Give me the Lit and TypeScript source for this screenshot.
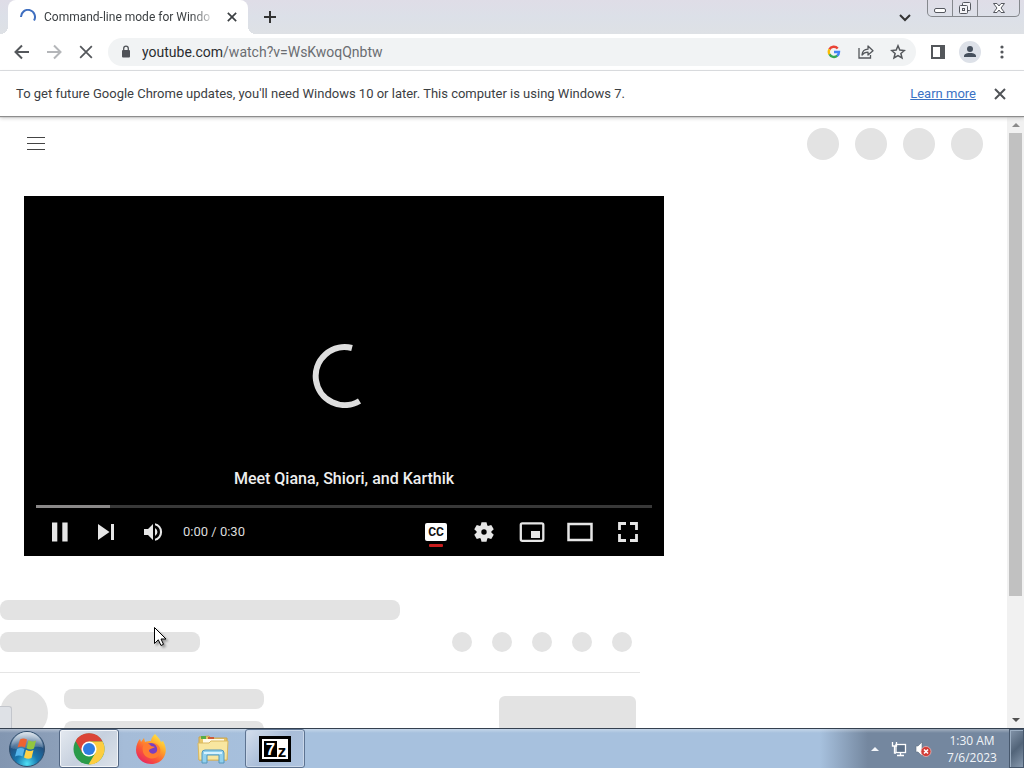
import { LitElement, html, css, svg } from 'lit';
import { customElement, property } from 'lit/decorators.js';

const baseStyles = css`
  :host, * { box-sizing: border-box; }
  button {
    display: flex;
    align-items: center;
    justify-content: center;
    flex: none;
    background: none;
    border: none;
    padding: 0;
    color: inherit;
    font: inherit;
    cursor: default;
  }
  svg { display: block; flex: none; }
`;

const closeIcon = (size: number, width: number) => html`
  <svg width=${size} height=${size} viewBox="0 0 12 12" fill="none" stroke="currentColor" stroke-width=${width}>
    <path d="M1 1 11 11M11 1 1 11" />
  </svg>
`;

@customElement('browser-tabs')
export class BrowserTabs extends LitElement {
  @property({ type: String }) label = '';

  static styles = [baseStyles, css`
    :host {
      display: flex;
      height: 34px;
      padding-left: 8px;
      background: linear-gradient(#dfdde7, #dce0e8 50%, #dee1e5);
      color: #3c4043;
    }
    .tab {
      position: relative;
      display: flex;
      align-items: center;
      width: 240px;
      padding: 0 8px 0 12px;
      gap: 8px;
      background: #fff;
      border-radius: 8px 8px 0 0;
    }
    .tab::before, .tab::after {
      content: '';
      position: absolute;
      bottom: 0;
      width: 8px;
      height: 8px;
    }
    .tab::before { left: -8px; background: radial-gradient(circle at 0 0, transparent 8px, #fff 8px); }
    .tab::after { right: -8px; background: radial-gradient(circle at 100% 0, transparent 8px, #fff 8px); }
    .label {
      flex: 1;
      overflow: hidden;
      white-space: nowrap;
      font-size: 12px;
      line-height: 16px;
      -webkit-mask-image: linear-gradient(90deg, #000 86%, transparent);
      mask-image: linear-gradient(90deg, #000 86%, transparent);
    }
    .close { width: 16px; height: 16px; }
    .new { width: 28px; margin-left: 8px; }
    .search { width: 28px; margin: 0 8px 0 auto; }
    .window {
      display: flex;
      height: 17px;
      margin-right: 4px;
      border: 1px solid #85888d;
      border-top: none;
      border-radius: 0 0 5px 5px;
      overflow: hidden;
    }
    .window button { width: 25px; border-right: 1px solid #85888d; }
    .window button:last-child { width: 41px; border: none; }
  `];

  render() {
    return html`
      <div class="tab">
        <svg width="16" height="16" viewBox="0 0 16 16" fill="none" stroke="#3f6fc0" stroke-width="2">
          <path d="M1 8A7 7 0 1 1 14 11.5" />
        </svg>
        <span class="label">${this.label}</span>
        <button class="close" aria-label="Close tab">${closeIcon(10, 2)}</button>
      </div>
      <button class="new" aria-label="New tab">
        <svg width="14" height="14" viewBox="0 0 14 14" stroke="#333" stroke-width="2"><path d="M7 1V13M1 7H13" /></svg>
      </button>
      <button class="search" aria-label="Search tabs">
        <svg width="12" height="12" viewBox="0 0 12 12" fill="none" stroke="#333" stroke-width="2"><path d="M1 4 6 9 11 4" /></svg>
      </button>
      <div class="window">
        <button aria-label="Minimize">
          <svg width="14" height="16" viewBox="0 0 14 16" fill="#fff" stroke="#55585f"><rect x="1.5" y="8.5" width="11" height="4" rx="1.5" /></svg>
        </button>
        <button aria-label="Restore">
          <svg width="14" height="16" viewBox="0 0 14 16" fill="#f4f4f7" stroke="#55585f">
            <rect x="4.5" y="2.5" width="8" height="8" rx="1" />
            <rect x="1.5" y="5.5" width="8" height="8" rx="1" />
            <rect x="4.5" y="8.5" width="2" height="2" />
          </svg>
        </button>
        <button aria-label="Close">
          <svg width="14" height="16" viewBox="0 0 14 16" fill="#fff" stroke="#55585f">
            <path d="M1.5 3.5H5L7 6 9 3.5H12.5L9 8 12.5 12.5H9L7 10 5 12.5H1.5L5 8Z" />
          </svg>
        </button>
      </div>
    `;
  }
}

@customElement('browser-toolbar')
export class BrowserToolbar extends LitElement {
  @property({ type: String }) host = '';
  @property({ type: String }) path = '';

  static styles = [baseStyles, css`
    :host {
      display: flex;
      align-items: center;
      height: 37px;
      padding: 0 8px;
      gap: 4px;
      background: #fff;
      border-bottom: 1px solid #dadce0;
      color: #54575b;
    }
    button { width: 28px; height: 28px; border-radius: 50%; }
    .off { color: #b4b6b9; }
    .address {
      flex: 1;
      display: flex;
      align-items: center;
      height: 28px;
      margin: 0 4px;
      padding: 0 4px;
      gap: 4px;
      background: #f1f3f4;
      border-radius: 14px;
    }
    .url {
      flex: 1;
      overflow: hidden;
      white-space: nowrap;
      margin-left: -2px;
      font-size: 14px;
      line-height: 20px;
      color: #6a6d71;
    }
    .url b { font-weight: 400; color: #2b2d30; }
    .avatar { width: 22px; height: 22px; border-radius: 50%; background: #dde1e8; }
  `];

  render() {
    return html`
      <button aria-label="Back">
        <svg width="16" height="16" viewBox="0 0 16 16" fill="none" stroke="currentColor" stroke-width="2"><path d="M15 8H2M8 1.5 1.5 8 8 14.5" /></svg>
      </button>
      <button class="off" aria-label="Forward" disabled>
        <svg width="16" height="16" viewBox="0 0 16 16" fill="none" stroke="currentColor" stroke-width="2"><path d="M1 8H14M8 1.5 14.5 8 8 14.5" /></svg>
      </button>
      <button aria-label="Stop">${closeIcon(14, 1.5)}</button>
      <div class="address">
        <button aria-label="Site information">
          <svg width="12" height="14" viewBox="0 0 12 14" fill="#505358">
            <rect x="2" y="5" width="8" height="7.5" rx="1" />
            <path d="M3.7 6V3.5a2.3 2.3 0 0 1 4.6 0V6" fill="none" stroke="#505358" stroke-width="1.3" />
          </svg>
        </button>
        <span class="url"><b>${this.host}</b>${this.path}</span>
        <button aria-label="Search with Google">
          <svg width="14" height="14" viewBox="0 0 14 14" fill="none" stroke-width="2.4">
            <path d="M2.4 4.4A5 5 0 0 1 10.7 3.5" stroke="#ea4335" />
            <path d="M2.5 9.3A5 5 0 0 1 2.5 4.3" stroke="#fbbc05" />
            <path d="M10.3 10.7A5 5 0 0 1 2.5 9.2" stroke="#34a853" />
            <path d="M7 7H12A5 5 0 0 1 10.2 10.8" stroke="#4285f4" />
          </svg>
        </button>
        <button aria-label="Share">
          <svg width="16" height="16" viewBox="0 0 16 16" fill="none" stroke="currentColor" stroke-width="1.3">
            <path d="M1 4V14H12.5V11" />
            <path d="M4 11C4.3 7 6.5 5.3 10 5.2V2L15 6.7 10 11V8.2C7.2 8.2 5.5 9 4 11Z" stroke-linejoin="round" />
          </svg>
        </button>
        <button aria-label="Bookmark this tab">
          <svg width="16" height="16" viewBox="0 0 16 16" fill="none" stroke="currentColor" stroke-width="1.5">
            <path d="M8 1.8 9.8 6.1 14.4 6.5 10.9 9.5 12 14 8 11.6 4 14 5.1 9.5 1.6 6.5 6.2 6.1Z" />
          </svg>
        </button>
      </div>
      <button aria-label="Side panel">
        <svg width="14" height="14" viewBox="0 0 14 14" fill="currentColor"><path d="M0 0H14V14H0ZM2 2V12H9V2Z" fill-rule="evenodd" /></svg>
      </button>
      <button aria-label="Profile">
        <svg class="avatar" viewBox="0 0 22 22" fill="#46505d"><circle cx="11" cy="8" r="3" /><path d="M5 16V15C5 12.5 9 12 11 12S17 12.5 17 15V16Z" /></svg>
      </button>
      <button aria-label="Menu">
        <svg width="4" height="14" viewBox="0 0 4 14" fill="currentColor"><circle cx="2" cy="2" r="1.6" /><circle cx="2" cy="7" r="1.6" /><circle cx="2" cy="12" r="1.6" /></svg>
      </button>
    `;
  }
}

@customElement('info-bar')
export class InfoBar extends LitElement {
  static styles = [baseStyles, css`
    :host {
      position: relative;
      z-index: 1;
      display: flex;
      align-items: center;
      height: 45px;
      padding: 0 10px 0 16px;
      background: #fff;
      box-shadow: 0 1px 1px #8d8d8d, 0 2px 4px #c8c8c8;
      color: #3c4043;
      font-size: 13px;
      line-height: 20px;
    }
    a { margin: 0 10px 0 auto; color: #3b72c4; }
    button { width: 28px; height: 28px; color: #505357; }
  `];

  render() {
    return html`
      <span>To get future Google Chrome updates, you'll need Windows 10 or later. This computer is using Windows 7.</span>
      <a href="#">Learn more</a>
      <button aria-label="Dismiss">${closeIcon(12, 2)}</button>
    `;
  }
}

@customElement('video-player')
export class VideoPlayer extends LitElement {
  @property({ type: String }) heading = '';
  @property({ type: String }) time = '';
  @property({ type: Number }) loaded = 0;

  static styles = [baseStyles, css`
    :host {
      display: flex;
      flex-direction: column;
      aspect-ratio: 16 / 9;
      padding: 0 12px;
      background: #000;
      color: #e6e6e6;
    }
    .stage {
      flex: 1;
      display: flex;
      flex-direction: column;
      align-items: center;
      justify-content: flex-end;
      gap: 59px;
      padding-bottom: 14px;
    }
    .heading { font-size: 16px; font-weight: 500; line-height: 24px; color: #eee; }
    .track { height: 3px; background: #383838; }
    .loaded { height: 3px; background: #8a8888; }
    .controls { display: flex; align-items: center; height: 48px; }
    button { width: 48px; height: 48px; }
    .narrow { width: 46px; }
    .time { margin: 0 auto 0 7px; font-size: 13px; line-height: 16px; color: #ddd; }
    .cc { font-size: 12px; font-weight: 700; }
  `];

  private _button(label: string, shape: unknown, cls = '') {
    return html`
      <button class=${cls} aria-label=${label}>
        <svg width="48" height="48" viewBox="0 0 48 48" fill="currentColor">${shape}</svg>
      </button>
    `;
  }

  render() {
    return html`
      <div class="stage">
        <svg width="64" height="64" viewBox="0 0 64 64" fill="none" stroke="#dedede" stroke-width="6">
          <path d="M40 4A29 29 0 1 0 47.5 57" />
        </svg>
        <div class="heading">${this.heading}</div>
      </div>
      <div class="track"><div class="loaded" style="width: ${this.loaded}%"></div></div>
      <div class="controls">
        ${this._button('Pause', svg`<path d="M16 14.5H21.3V33.5H16ZM26.3 14.5H31.6V33.5H26.3Z" />`)}
        ${this._button('Next', svg`<path d="M15 16 26.5 24 15 32ZM28 16H31V32H28Z" />`, 'narrow')}
        ${this._button('Mute', svg`
          <path transform="translate(6 6)" d="M9 21h4l5 5V10l-5 5H9Z" />
          <path transform="translate(7 6)" d="M19 14v8a4.5 4.5 0 0 0 0-8ZM19 11.3a7 7 0 0 1 0 13.4v2.1a9 9 0 0 0 0-17.6Z" />
        `, 'narrow')}
        <span class="time">${this.time}</span>
        ${this._button('Subtitles', svg`
          <rect x="13" y="15" width="22" height="18" rx="2" fill="#fff" />
          <text class="cc" x="24" y="28" text-anchor="middle" fill="#111">CC</text>
          <rect x="17" y="36" width="14" height="3" rx="1" fill="#c81d1d" />
        `)}
        ${this._button('Settings', svg`
          <circle cx="24" cy="24" r="5" fill="none" stroke="currentColor" stroke-width="4.6" />
          ${[0, 60, 120, 180, 240, 300].map((a) => svg`<path transform="rotate(${a} 24 24)" d="M21.5 14.2H26.5L27.6 18.5H20.4Z" />`)}
        `)}
        ${this._button('Miniplayer', svg`
          <rect x="12.8" y="15.3" width="22.5" height="17.5" rx="1.5" fill="none" stroke="currentColor" stroke-width="2.3" />
          <rect x="23" y="23" width="9" height="7" />
        `)}
        ${this._button('Theater mode', svg`<rect x="12.5" y="16" width="23" height="16" fill="none" stroke="currentColor" stroke-width="2.5" />`)}
        ${this._button('Full screen', svg`
          <path d="M15.5 22V15.5H22M26 15.5H32.5V22M32.5 26V32.5H26M22 32.5H15.5V26" fill="none" stroke="currentColor" stroke-width="2.8" />
        `)}
      </div>
    `;
  }
}

@customElement('watch-page')
export class WatchPage extends LitElement {
  static styles = [baseStyles, css`
    :host { display: flex; min-height: 0; background: #fff; }
    .content { flex: 1; overflow: hidden; }
    header {
      display: flex;
      align-items: center;
      height: 56px;
      padding: 0 24px;
      gap: 16px;
    }
    header button { width: 24px; height: 24px; margin-right: auto; }
    .dot { width: 32px; height: 32px; border-radius: 50%; background: #e3e3e3; }
    .small { width: 20px; height: 20px; }
    .large { width: 48px; height: 48px; }
    video-player { max-width: 640px; margin: 24px 24px 44px; }
    .details { max-width: 640px; }
    .bar { width: 200px; height: 20px; border-radius: 8px; background: #e3e3e3; }
    .title { width: 400px; }
    .row { display: flex; gap: 20px; padding: 12px 8px 20px 0; border-bottom: 1px solid #e5e5e5; }
    .row .bar { margin-right: auto; }
    .owner { display: flex; gap: 16px; padding: 16px 4px 0 0; }
    .lines { display: flex; flex-direction: column; gap: 12px; margin-right: auto; }
    .subscribe { width: 137px; height: 36px; margin-top: 7px; border-radius: 6px; background: #e3e3e3; }
    .scroll {
      display: flex;
      flex-direction: column;
      align-items: center;
      width: 17px;
      padding-top: 1px;
      background: #f1f1f1;
    }
    .scroll button { width: 16px; height: 16px; }
    .rail { flex: 1; width: 13px; }
    .thumb { height: 80%; background: #c1c1c1; }
  `];

  render() {
    return html`
      <div class="content">
        <header>
          <button aria-label="Guide">
            <svg width="18" height="14" viewBox="0 0 18 14" stroke="#444"><path d="M0 .5H18M0 6.5H18M0 12.5H18" /></svg>
          </button>
          ${[1, 2, 3, 4].map(() => html`<div class="dot"></div>`)}
        </header>
        <video-player heading="Meet Qiana, Shiori, and Karthik" time="0:00 / 0:30" loaded="12"></video-player>
        <div class="details">
          <div class="bar title"></div>
          <div class="row">
            <div class="bar"></div>
            ${[1, 2, 3, 4, 5].map(() => html`<div class="dot small"></div>`)}
          </div>
          <div class="owner">
            <div class="dot large"></div>
            <div class="lines"><div class="bar"></div><div class="bar"></div></div>
            <div class="subscribe"></div>
          </div>
        </div>
      </div>
      <div class="scroll">
        <button aria-label="Scroll up"><svg width="8" height="4" viewBox="0 0 8 4" fill="#8a8a8a"><path d="M0 4 4 0 8 4Z" /></svg></button>
        <div class="rail"><div class="thumb"></div></div>
        <button aria-label="Scroll down"><svg width="8" height="4" viewBox="0 0 8 4" fill="#505050"><path d="M0 0 4 4 8 0Z" /></svg></button>
      </div>
    `;
  }
}

@customElement('task-bar')
export class TaskBar extends LitElement {
  @property({ type: String }) time = '';
  @property({ type: String }) date = '';

  static styles = [baseStyles, css`
    :host {
      position: relative;
      z-index: 1;
      display: flex;
      height: 40px;
      gap: 2px;
      border-top: 1px solid #34404f;
      background:
        linear-gradient(#ffffff55, #ffffff00 4px),
        linear-gradient(90deg, #8296b1 0, #8c9fb9 56px, #a5bcd8 124px, #a7c1de 300px, #a7c1de 820px, #74879f 868px, #74879f);
    }
    .start { width: 54px; margin-right: 3px; }
    .task { width: 60px; border: 1px solid transparent; border-radius: 3px; }
    .active { border-color: #526682; background: linear-gradient(135deg, #e4e9f0, #c6d0de 50%, #dde3ea); box-shadow: inset 0 0 0 1px #f2f5f9; }
    .open { border-color: #5d7391; background: linear-gradient(135deg, #d5dfed, #a9bdd8 50%, #aec4e0); box-shadow: inset 0 0 0 1px #c9d7e9; }
    .tray { display: flex; align-items: center; gap: 4px; margin-left: auto; }
    .tray button { width: 20px; height: 24px; }
    .clock {
      width: 70px;
      color: #f0f4f8;
      font-family: "Open Sans", "Noto Sans", sans-serif;
      font-size: 12px;
      line-height: 17px;
      text-align: center;
    }
    .desktop { width: 15px; border: 1px solid #46576c; box-shadow: inset 1px 1px #9dafc3; background: linear-gradient(135deg, #8495aa, #526479 50%, #8799ae); }
    .badge { font-family: "Liberation Sans", sans-serif; font-weight: 700; }
  `];

  render() {
    return html`
      <button class="start" aria-label="Start">
        <svg width="38" height="38" viewBox="0 0 38 38">
          <defs>
            <radialGradient id="orb" cx="50%" cy="92%" r="90%">
              <stop offset="0" stop-color="#4fe0f5" /><stop offset=".35" stop-color="#1877ae" />
              <stop offset=".7" stop-color="#23507f" /><stop offset="1" stop-color="#8fa9c2" />
            </radialGradient>
            <linearGradient id="gloss" x2="0" y2="1"><stop stop-color="#fff" stop-opacity=".7" /><stop offset="1" stop-color="#fff" stop-opacity=".12" /></linearGradient>
          </defs>
          <circle cx="19" cy="19" r="17.5" fill="url(#orb)" stroke="#304d6b" />
          <path d="M3 18A16 16 0 0 1 35 18C26 14 12 22 3 18Z" fill="url(#gloss)" />
          <path d="M12 9.5C14 8 16.5 8 19 9.5L17 17.5C14.5 16 12 16 9.5 17.5Z" fill="#ee6331" />
          <path d="M20.5 10.3C23 11.8 25.5 11.8 28 10.5L26 18.5C23.5 20 21 19.5 18.5 18.2Z" fill="#92c63f" />
          <path d="M9 19C11.5 17.5 14 17.5 16.5 19L14.5 26.5C12 25 9.5 25 7 26.5Z" fill="#55b6ec" />
          <path d="M18 19.8C20.5 21.2 23 21.5 25.5 20L23.5 28C21 29.3 18.5 28.8 16 27.5Z" fill="#ffd246" />
        </svg>
      </button>
      <button class="task active" aria-label="Google Chrome">
        <svg width="32" height="32" viewBox="0 0 32 32">
          <circle cx="16" cy="16" r="15.5" fill="#2a9b4a" />
          <path d="M16 8.5H29.6A15.5 15.5 0 0 0 2.6 8L9.5 20 12 12Z" fill="#db4437" />
          <path d="M22.5 19.7 15.5 31.5A15.5 15.5 0 0 0 29.6 8.5H16Z" fill="#fdcd40" />
          <circle cx="16" cy="16" r="7.6" fill="#fff" />
          <circle cx="16" cy="16" r="6" fill="#2f7de1" />
        </svg>
      </button>
      <button class="task" aria-label="Firefox">
        <svg width="32" height="32" viewBox="0 0 32 32">
          <defs>
            <linearGradient id="fox" x1=".9" y1=".05" x2=".2" y2="1">
              <stop offset="0" stop-color="#fff24a" /><stop offset=".35" stop-color="#ffa62b" />
              <stop offset=".65" stop-color="#fb5a36" /><stop offset="1" stop-color="#e62066" />
            </linearGradient>
          </defs>
          <path d="M20 1C22 3 25 6 26 9L28 8C31 13 32 19 29 24 26 29 21 31 16 31 8 31 1 25 1 17 1 12 3 8 5 6L6 9 9 5 10 9C12 8 14 8 16 8 16 5 18 3 20 1Z" fill="url(#fox)" />
          <circle cx="16" cy="17" r="7" fill="#7a3fc0" />
          <path d="M9 11C12 9 15 11 16 13L20 14C18 16 14 15 14 18 15 21 20 22 22 18 23 15 21 12 18 10 25 11 27 17 24 22 20 28 10 26 8 19 7 15 8 13 9 11Z" fill="#ff7c31" />
        </svg>
      </button>
      <button class="task" aria-label="Windows Explorer">
        <svg width="32" height="30" viewBox="0 0 32 30">
          <path d="M2 3 12 2 14 4H30V26H2Z" fill="#e9c767" stroke="#c9a450" />
          <rect x="4" y="2" width="5" height="3" fill="#58ad45" /><rect x="11" y="3" width="6" height="3" fill="#ce5b38" />
          <rect x="20" y="5" width="7" height="3" fill="#5b9fd1" /><rect x="6" y="5" width="21" height="4" fill="#fff9e7" />
          <path d="M1 9H12L14 7H31L30 26H2Z" fill="#f8e6a0" stroke="#d9b861" />
          <path d="M5 29V19Q5 16 8 16H24Q27 16 27 19V29H22V21H10V29Z" fill="#91d1ee" stroke="#5297bd" />
          <path d="M7 19H25" stroke="#d7f3ff" stroke-width="2" />
        </svg>
      </button>
      <button class="task open" aria-label="7-Zip">
        <svg class="badge" width="32" height="26" viewBox="0 0 32 26">
          <rect x="1.5" y="1.5" width="29" height="23" fill="#fff" stroke="#000" stroke-width="3" />
          <rect x="5" y="5" width="13" height="16" fill="#000" />
          <text x="11.5" y="19" text-anchor="middle" fill="#fff" font-size="17">7</text>
          <text x="23" y="21" text-anchor="middle" fill="#000" font-size="17">z</text>
        </svg>
      </button>
      <div class="tray">
        <button aria-label="Show hidden icons"><svg width="8" height="4" viewBox="0 0 8 4" fill="#f3f6fa"><path d="M0 4 4 0 8 4Z" /></svg></button>
        <button aria-label="Network">
          <svg width="16" height="16" viewBox="0 0 16 16" fill="none" stroke="#fff" stroke-width="1.3">
            <rect x="5" y="3.5" width="9.5" height="8" fill="#5b6f87" /><path d="M9.5 12V14M6 14.5H13" />
            <path d="M1.5 1V5H5.5V1M3.5 5V12H5" />
          </svg>
        </button>
        <button aria-label="Volume muted">
          <svg width="18" height="16" viewBox="0 0 18 16">
            <path d="M2 5H4L8 1V15L4 11H2Z" fill="#fff" stroke="#5e6e82" stroke-width=".6" />
            <circle cx="12" cy="10.5" r="5" fill="#d23b35" stroke="#f1c0bd" stroke-width=".7" />
            <path d="M10 8.5 14 12.5M14 8.5 10 12.5" stroke="#fff" stroke-width="1.6" />
          </svg>
        </button>
        <div class="clock"><div>${this.time}</div><div>${this.date}</div></div>
      </div>
      <button class="desktop" aria-label="Show desktop"></button>
    `;
  }
}

@customElement('app-root')
export class AppRoot extends LitElement {
  static styles = css`
    :host {
      position: relative;
      display: flex;
      flex-direction: column;
      height: 100vh;
      overflow: hidden;
      font-family: Roboto, "Liberation Sans", sans-serif;
    }
    watch-page { flex: 1; }
    .status {
      position: absolute;
      left: 0;
      bottom: 40px;
      width: 11px;
      height: 21px;
      background: #dee1e6;
      border: 1px solid #c3c6cc;
      border-width: 1px 1px 0 0;
      border-radius: 0 3px 0 0;
    }
    .cursor {
      position: absolute;
      left: 154px;
      top: 626px;
      filter: drop-shadow(2px 2px 1px #0005);
    }
  `;

  render() {
    return html`
      <browser-tabs label="Command-line mode for Windo"></browser-tabs>
      <browser-toolbar host="youtube.com" path="/watch?v=WsKwoqQnbtw"></browser-toolbar>
      <info-bar></info-bar>
      <watch-page></watch-page>
      <task-bar time="1:30 AM" date="7/6/2023"></task-bar>
      <div class="status"></div>
      <svg class="cursor" width="13" height="21" viewBox="0 0 13 21" fill="#fff" stroke="#000">
        <path d="M.5 1.5V17.5L4.3 13.8 7 19.5 9.5 18.3 7 13H12Z" />
      </svg>
    `;
  }
}

declare global {
  interface HTMLElementTagNameMap {
    'app-root': AppRoot;
  }
}
